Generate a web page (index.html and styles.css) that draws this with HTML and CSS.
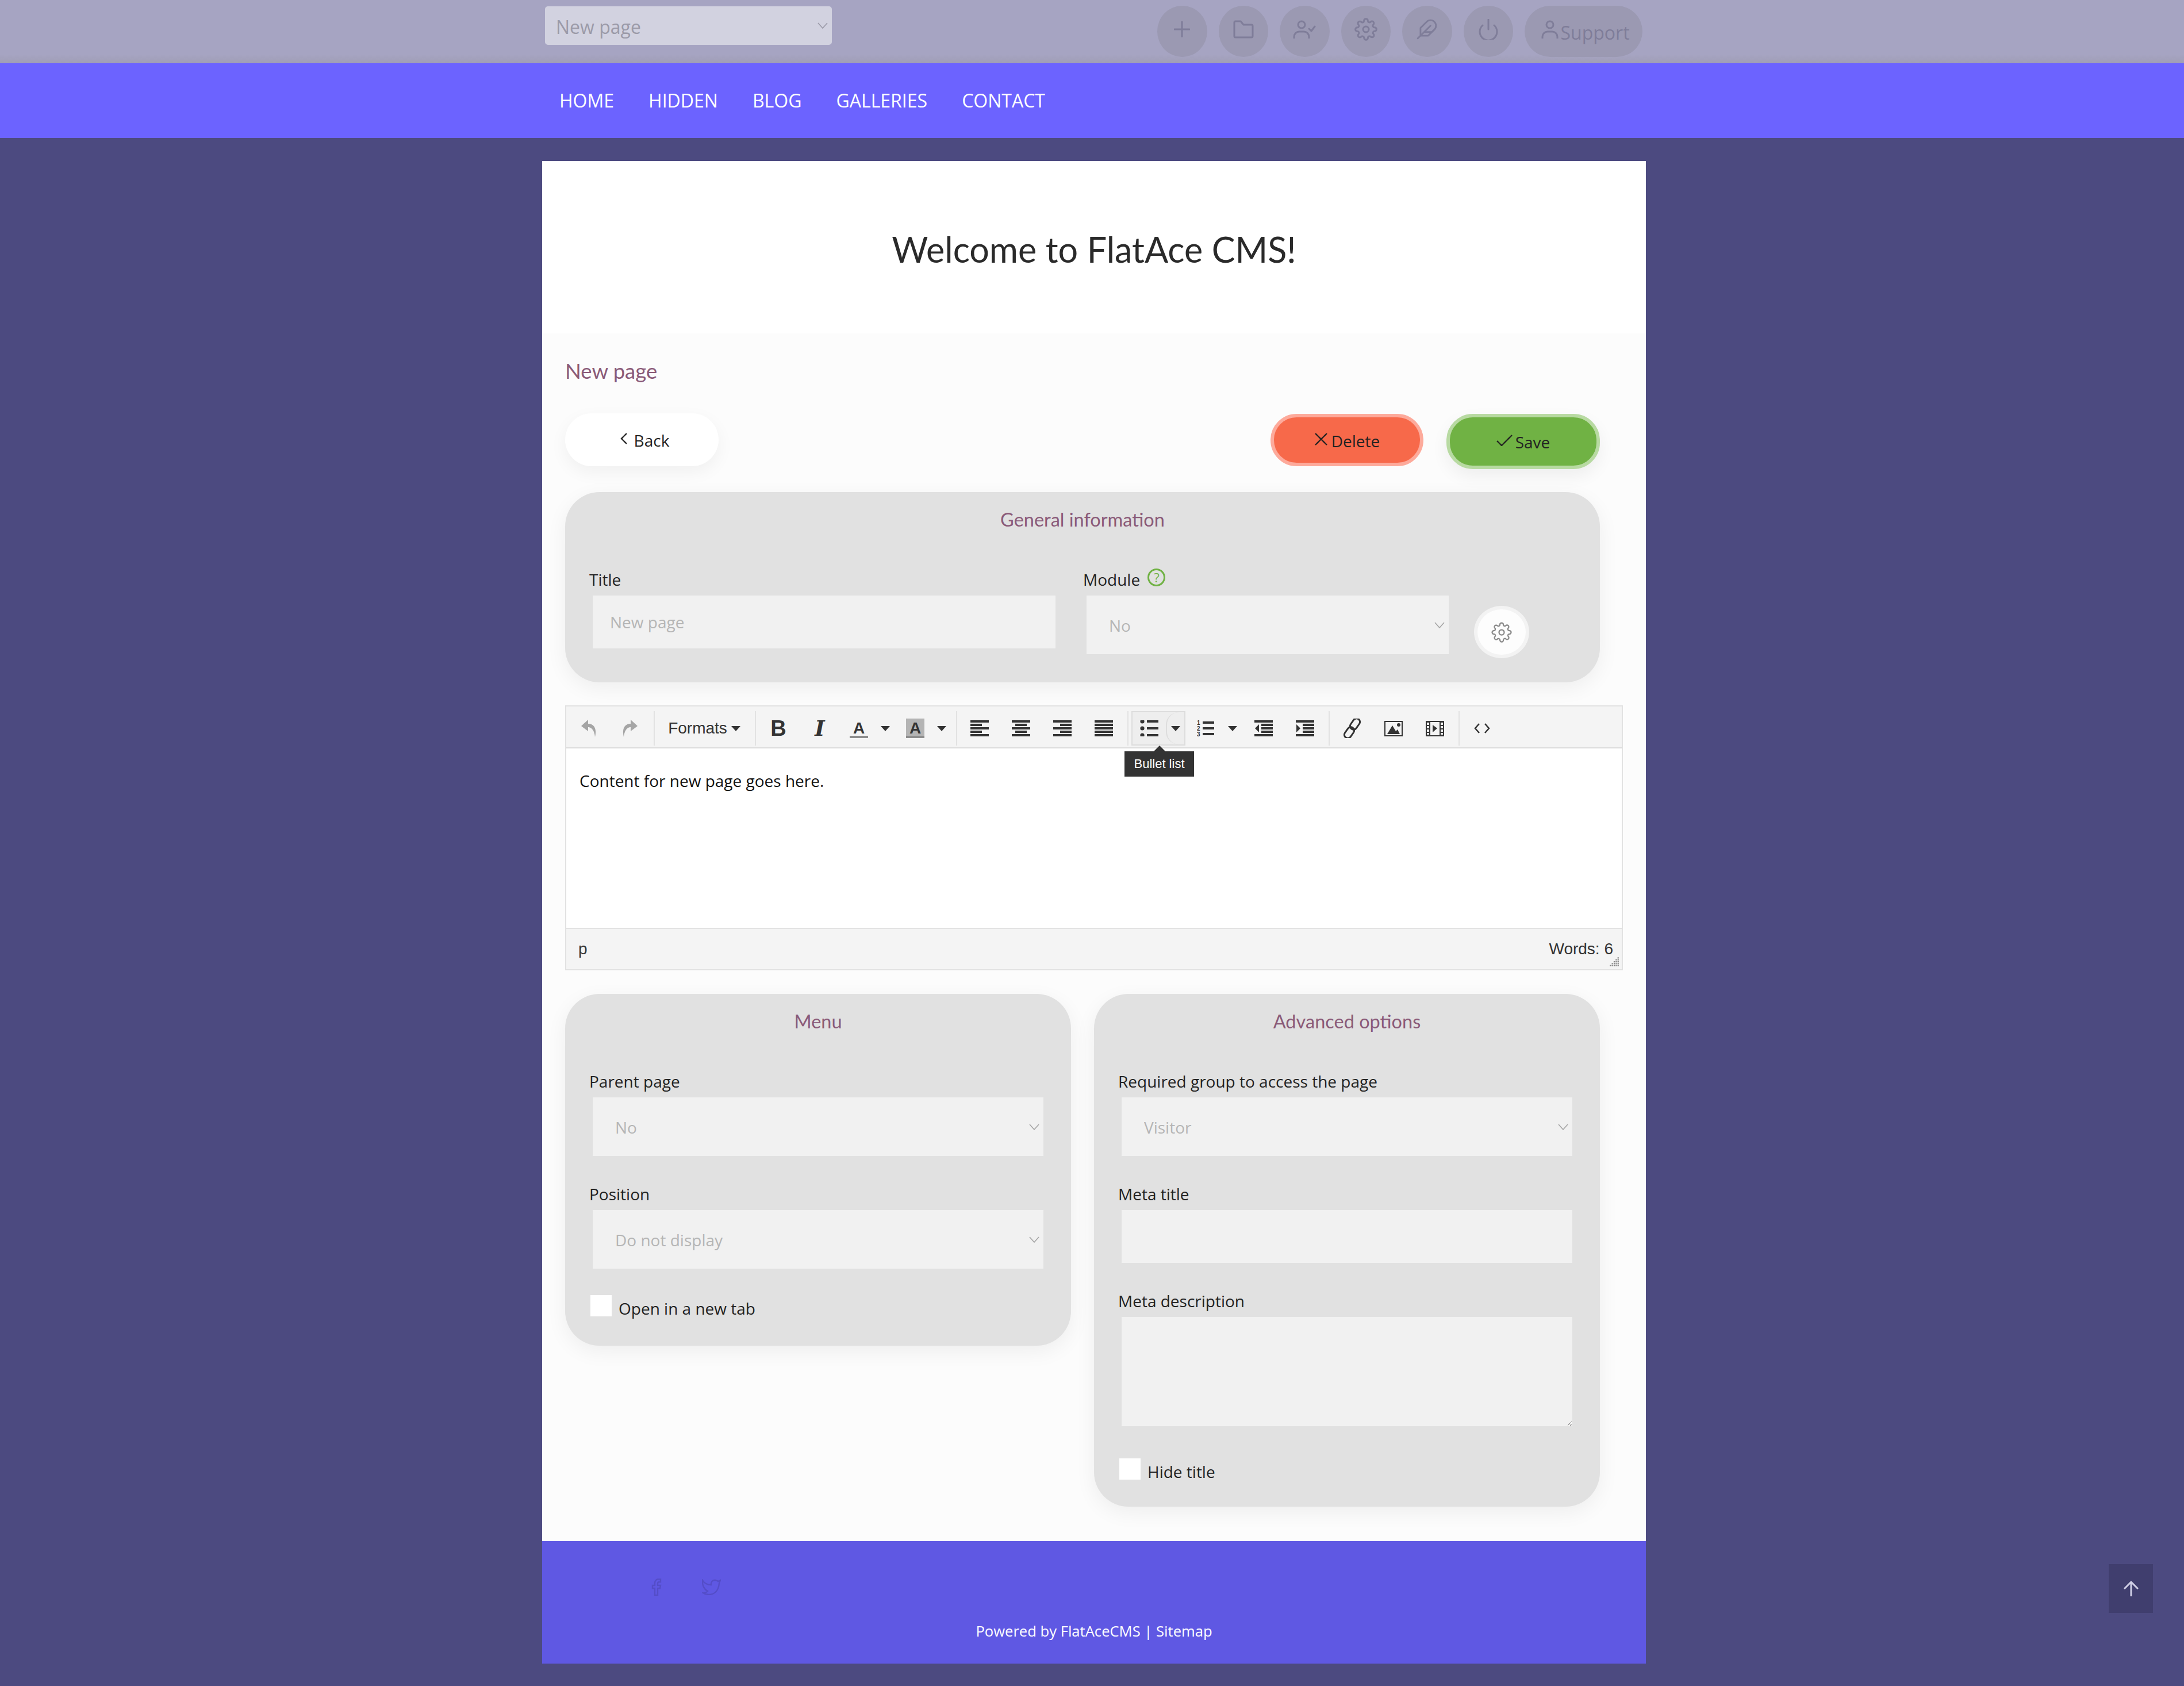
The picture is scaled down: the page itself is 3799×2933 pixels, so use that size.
FILE: index.html
```html
<!DOCTYPE html>
<html lang="en">
<head>
<meta charset="utf-8">
<title>New page - FlatAce CMS</title>
<link rel="stylesheet" href="styles.css">
</head>
<body>
<svg class="defs" xmlns="http://www.w3.org/2000/svg">
  <symbol id="gear" viewBox="0 0 24 24"><circle cx="12" cy="12" r="3"/><path d="M19.4 15a1.65 1.65 0 0 0 .33 1.82l.06.06a2 2 0 0 1 0 2.83 2 2 0 0 1-2.83 0l-.06-.06a1.65 1.65 0 0 0-1.82-.33 1.65 1.65 0 0 0-1 1.51V21a2 2 0 0 1-2 2 2 2 0 0 1-2-2v-.09A1.65 1.65 0 0 0 9 19.4a1.65 1.65 0 0 0-1.82.33l-.06.06a2 2 0 0 1-2.83 0 2 2 0 0 1 0-2.83l.06-.06a1.65 1.65 0 0 0 .33-1.82 1.65 1.65 0 0 0-1.51-1H3a2 2 0 0 1-2-2 2 2 0 0 1 2-2h.09A1.65 1.65 0 0 0 4.6 9a1.65 1.65 0 0 0-.33-1.82l-.06-.06a2 2 0 0 1 0-2.83 2 2 0 0 1 2.83 0l.06.06a1.65 1.65 0 0 0 1.82.33H9a1.65 1.65 0 0 0 1-1.51V3a2 2 0 0 1 2-2 2 2 0 0 1 2 2v.09a1.65 1.65 0 0 0 1 1.51 1.65 1.65 0 0 0 1.82-.33l.06-.06a2 2 0 0 1 2.83 0 2 2 0 0 1 0 2.83l-.06.06a1.65 1.65 0 0 0-.33 1.82V9a1.65 1.65 0 0 0 1.51 1H21a2 2 0 0 1 2 2 2 2 0 0 1-2 2h-.09a1.65 1.65 0 0 0-1.51 1z"/></symbol>
  <symbol id="al-left" viewBox="0 0 32 28"><path d="M0 0h32v4H0zM0 6h20v4H0zM0 12h32v4H0zM0 18h20v4H0zM0 24h32v4H0z"/></symbol>
  <symbol id="al-center" viewBox="0 0 32 28"><path d="M0 0h32v4H0zM6 6h20v4H6zM0 12h32v4H0zM6 18h20v4H6zM0 24h32v4H0z"/></symbol>
  <symbol id="al-right" viewBox="0 0 32 28"><path d="M0 0h32v4H0zM12 6h20v4H12zM0 12h32v4H0zM12 18h20v4H12zM0 24h32v4H0z"/></symbol>
  <symbol id="al-just" viewBox="0 0 32 28"><path d="M0 0h32v4H0zM0 6h32v4H0zM0 12h32v4H0zM0 18h32v4H0zM0 24h32v4H0z"/></symbol>
</svg>

<header class="topbar">
  <div class="topbar-inner">
    <select class="page-select" aria-label="Page"><option>New page</option></select>
    <div class="tools">
      <span class="tool"><svg class="i-line" width="28" height="28" viewBox="0 0 28 28"><path d="M14 1v26M1 14h26"/></svg></span>
      <span class="tool"><svg class="i-line" width="36" height="32" viewBox="0 0 36 32"><path d="M2 4a2 2 0 0 1 2-2h9l5 6h14a2 2 0 0 1 2 2v18a2 2 0 0 1-2 2H4a2 2 0 0 1-2-2z"/></svg></span>
      <span class="tool"><svg class="i-line" width="40" height="32" viewBox="0 0 40 32"><circle cx="15" cy="8" r="6"/><path d="M2 32v-3a9 9 0 0 1 9-9h8a9 9 0 0 1 9 9v3M28 15l4 4 6-8"/></svg></span>
      <span class="tool"><svg class="i-line i-thin" width="40" height="40"><use href="#gear"/></svg></span>
      <span class="tool"><svg class="i-line i-thin" width="38" height="38" viewBox="0 0 24 24"><path d="M20.24 12.24a6 6 0 0 0-8.49-8.49L5 10.5V19h8.5zM16 8 2 22M17.5 15H9"/></svg></span>
      <span class="tool"><svg class="i-line" width="34" height="36" viewBox="0 0 34 36"><path d="M27 11a15 15 0 1 1-20 0M17 1v17"/></svg></span>
      <span class="tool tool-pill"><svg class="i-line" width="30" height="32" viewBox="0 0 30 32"><circle cx="15" cy="8" r="6"/><path d="M2 32v-3a9 9 0 0 1 9-9h8a9 9 0 0 1 9 9v3"/></svg><span class="pill-text">Support</span></span>
    </div>
  </div>
</header>

<nav class="nav">
  <div class="nav-inner">
    <a class="nav-link">HOME</a>
    <a class="nav-link">HIDDEN</a>
    <a class="nav-link">BLOG</a>
    <a class="nav-link">GALLERIES</a>
    <a class="nav-link">CONTACT</a>
  </div>
</nav>

<div class="wrap">
  <div class="banner"><h1 class="site-title">Welcome to FlatAce CMS!</h1></div>

  <main class="content">
    <h2 class="page-title">New page</h2>

    <div class="actions">
      <a class="btn-pill btn-back"><svg class="i-ink" width="14" height="20" viewBox="0 0 14 20"><path d="M11 1 2 10l9 9"/></svg>Back</a>
      <div class="actions-right">
        <a class="btn-pill btn-delete"><svg class="i-ink" width="24" height="22" viewBox="0 0 24 22"><path d="m2 1 20 20M22 1 2 21"/></svg>Delete</a>
        <a class="btn-pill btn-save"><svg class="i-ink" width="28" height="20" viewBox="0 0 28 20"><path d="m1 11 8 8L27 1"/></svg>Save</a>
      </div>
    </div>

    <section class="panel panel-general">
      <h3 class="panel-title">General information</h3>
      <div class="general-row">
        <div class="field field-title">
          <label class="label">Title</label>
          <input class="control control-input" type="text" placeholder="New page">
        </div>
        <div class="field field-module">
          <label class="label">Module <span class="help">?</span></label>
          <select class="control control-select" aria-label="Module"><option>No</option></select>
        </div>
        <span class="gear-btn"><svg class="i-grey" width="36" height="36"><use href="#gear"/></svg></span>
      </div>
    </section>

    <section class="editor">
      <div class="toolbar">
        <div class="tb-group tb-first">
          <span class="tb"><svg class="i-off" width="26" height="30" viewBox="0 0 26 30"><path d="M12 0 0 11l12 9v-7c6 0 11 6 12 17 3-12 0-23-12-23z"/></svg></span>
          <span class="tb"><svg class="i-off i-flip" width="26" height="30" viewBox="0 0 26 30"><path d="M12 0 0 11l12 9v-7c6 0 11 6 12 17 3-12 0-23-12-23z"/></svg></span>
        </div>
        <div class="tb-group">
          <span class="tb tb-formats">Formats<i class="caret"></i></span>
        </div>
        <div class="tb-group">
          <span class="tb tb-b">B</span>
          <span class="tb tb-i">I</span>
          <span class="tb tb-split"><span class="color-a">A</span><i class="caret"></i></span>
          <span class="tb tb-split"><span class="color-a color-a-bg">A</span><i class="caret"></i></span>
        </div>
        <div class="tb-group">
          <span class="tb"><svg class="i-fill" width="32" height="28"><use href="#al-left"/></svg></span>
          <span class="tb"><svg class="i-fill" width="32" height="28"><use href="#al-center"/></svg></span>
          <span class="tb"><svg class="i-fill" width="32" height="28"><use href="#al-right"/></svg></span>
          <span class="tb"><svg class="i-fill" width="32" height="28"><use href="#al-just"/></svg></span>
        </div>
        <div class="tb-group">
          <span class="tb-hover">
            <span class="tb-hover-main"><svg class="i-fill" width="32" height="28" viewBox="0 0 32 28"><circle cx="4" cy="2" r="3.600"/><circle cx="4" cy="14" r="3.600"/><circle cx="4" cy="26" r="3.600"/><path d="M12 0h20v4H12zM12 12h20v4H12zM12 24h20v4H12z"/></svg></span>
            <span class="tb-hover-caret"><i class="caret"></i></span>
            <span class="tooltip">Bullet list</span>
          </span>
          <span class="tb tb-split tb-num"><svg class="i-fill" width="32" height="30" viewBox="0 0 32 30"><text class="num-text" x="0" y="9">1</text><text class="num-text" x="0" y="19">2</text><text class="num-text" x="0" y="29">3</text><path d="M10 3h20v4H10zM10 13h20v4H10zM10 23h20v4H10z"/></svg><i class="caret"></i></span>
          <span class="tb"><svg class="i-fill" width="32" height="28" viewBox="0 0 32 28"><path d="M0 0h32v4H0zM12 6h20v4H12zM12 12h20v4H12zM12 18h20v4H12zM0 24h32v4H0zM8 7v14L1 14z"/></svg></span>
          <span class="tb"><svg class="i-fill" width="32" height="28" viewBox="0 0 32 28"><path d="M0 0h32v4H0zM12 6h20v4H12zM12 12h20v4H12zM12 18h20v4H12zM0 24h32v4H0zM1 7v14l7-7z"/></svg></span>
        </div>
        <div class="tb-group">
          <span class="tb"><svg class="i-link" width="36" height="34" viewBox="0 0 36 34"><rect x="17" y="-1" width="12" height="21" rx="6" transform="rotate(35 23 9.500)"/><rect x="7" y="14" width="12" height="21" rx="6" transform="rotate(35 13 24.500)"/></svg></span>
          <span class="tb"><svg class="i-fill" width="32" height="28" viewBox="0 0 32 28"><path fill-rule="evenodd" d="M0 1h32v27H0zM2 3v23h28V3z"/><path d="M5 24 14 9l6 10 3-3 4 8z"/><circle cx="25" cy="8" r="3"/></svg></span>
          <span class="tb"><svg class="i-fill" width="32" height="28" viewBox="0 0 32 28"><path fill-rule="evenodd" d="M0 1h32v27H0zM8 3v23h16V3z"/><path class="film-hole" d="M2 4h4v4H2zM2 10h4v4H2zM2 16h4v4H2zM2 22h4v3H2zM26 4h4v4h-4zM26 10h4v4h-4zM26 16h4v4h-4zM26 22h4v3h-4z"/><path d="m12 8 8 6-8 7z"/></svg></span>
        </div>
        <div class="tb-group tb-last">
          <span class="tb"><svg class="i-code" width="28" height="18" viewBox="0 0 28 18"><path d="M9 1 2 9l7 8M19 1l7 8-7 8"/></svg></span>
        </div>
      </div>
      <div class="editor-body"><p class="editor-text">Content for new page goes here.</p></div>
      <div class="statusbar">
        <span>p</span>
        <span>Words: 6</span>
        <svg class="grip" width="18" height="18" viewBox="0 0 16 16"><path d="M13 1h2v2h-2zM10 4h2v2h-2zM13 4h2v2h-2zM7 7h2v2H7zM10 7h2v2h-2zM13 7h2v2h-2zM4 10h2v2H4zM7 10h2v2H7zM10 10h2v2h-2zM13 10h2v2h-2zM1 13h2v2H1zM4 13h2v2H4zM7 13h2v2H7zM10 13h2v2h-2zM13 13h2v2h-2z"/></svg>
      </div>
    </section>

    <div class="columns">
      <section class="panel panel-menu">
        <h3 class="panel-title">Menu</h3>
        <div class="field">
          <label class="label">Parent page</label>
          <select class="control control-select" aria-label="Parent page"><option>No</option></select>
        </div>
        <div class="field">
          <label class="label">Position</label>
          <select class="control control-select" aria-label="Position"><option>Do not display</option></select>
        </div>
        <label class="check"><input class="check-box" type="checkbox">Open in a new tab</label>
      </section>

      <section class="panel panel-advanced">
        <h3 class="panel-title">Advanced options</h3>
        <div class="field">
          <label class="label">Required group to access the page</label>
          <select class="control control-select" aria-label="Required group"><option>Visitor</option></select>
        </div>
        <div class="field">
          <label class="label">Meta title</label>
          <input class="control control-input" type="text">
        </div>
        <div class="field field-desc">
          <label class="label">Meta description</label>
          <textarea class="control control-area"></textarea>
        </div>
        <label class="check check-hide"><input class="check-box" type="checkbox">Hide title</label>
      </section>
    </div>
  </main>

  <footer class="footer">
    <div class="social">
      <svg class="i-social" width="18" height="30" viewBox="0 0 18 30"><path d="M6 29V17H2v-5h4V8c0-4 2.500-7 7-7h3v5h-2c-2 0-3 1-3 3v3h5l-1 5h-4v12z"/></svg>
      <svg class="i-social" width="33" height="28" viewBox="0 0 33 28"><path d="M1 2c3 5 8 8 15 8-1-5 3-9 8-8 2 0 3 1 4 2l4-2-2 5c-1 14-9 20-18 20-4 0-7-1-10-3 3 0 6-1 8-3-6-3-10-11-9-19z"/></svg>
    </div>
    <p class="powered">Powered by FlatAceCMS | Sitemap</p>
  </footer>
</div>

<a class="to-top"><svg class="i-top" width="26" height="28" viewBox="0 0 26 28"><path d="M13 27V2M1 14 13 2l12 12"/></svg></a>
</body>
</html>
```

FILE: styles.css
```css
* { box-sizing: border-box; }

html, body { margin: 0; padding: 0; }

body {
  position: relative;
  height: 2933px;
  overflow: hidden;
  background: #4c4a80;
  font-family: "Open Sans", sans-serif;
  font-size: 28px;
  color: #222;
}

.defs { display: none; }

/* top bar */
.topbar {
  height: 110px;
  background: linear-gradient(#a6a4c2 0, #a6a4c2 86%, #a09eb6 100%);
}

.topbar-inner {
  width: 1920px;
  margin-left: 943px;
  padding: 10px 6px 0 5px;
  display: flex;
  justify-content: space-between;
  align-items: flex-start;
}

.page-select {
  appearance: none;
  width: 499px;
  height: 67px;
  margin-top: 1px;
  padding: 4px 0 0 19px;
  border: 0;
  border-radius: 5px;
  background: #d2d2e0 url("data:image/svg+xml,%3Csvg xmlns='http://www.w3.org/2000/svg' width='18' height='11'%3E%3Cpath d='M1 1l8 9 8-9' fill='none' stroke='%239b9aa8' stroke-width='1.6'/%3E%3C/svg%3E") no-repeat right 7px center;
  font: 32px "Open Sans", sans-serif;
  color: #9b9aa8;
}

.tools { display: flex; gap: 20px; }

.tool {
  width: 86.500px;
  height: 89px;
  border-radius: 50%;
  background: #9b99b2;
  display: flex;
  align-items: center;
  justify-content: center;
  padding-bottom: 7px;
}

.tool-pill {
  width: 205px;
  border-radius: 45px;
  gap: 3px;
  padding: 0 0 0 7px;
  align-items: center;
}

.tool-pill svg { margin-top: -7px; }

.pill-text {
  font-size: 32px;
  color: #7f7d99;
  line-height: 44px;
  margin-top: 4px;
}

.i-line { fill: none; stroke: #7f7d99; stroke-width: 3; stroke-linecap: round; stroke-linejoin: round; }
.i-line.i-thin { stroke-width: 1.800; }

/* nav */
.nav { height: 130px; background: #6c63ff; }

.nav-inner {
  width: 1920px;
  margin-left: 943px;
  padding-left: 30px;
  display: flex;
  gap: 60px;
}

.nav-link {
  font-size: 32px;
  line-height: 130px;
  color: #fff;
}

/* page frame */
.wrap {
  width: 1920px;
  margin: 40px 0 0 943px;
}

.banner {
  height: 300px;
  background: #fff;
  display: flex;
  align-items: center;
  justify-content: center;
}

.site-title {
  margin: 0 0 -6px;
  font: 400 61px "Lato", sans-serif;
  color: #2a2a2a;
}

.content {
  height: 2101px;
  background: #fcfcfc;
  padding: 45px 40px 0;
}

.page-title {
  margin: 0 0 54px;
  font: 400 36.500px/40px "Lato", sans-serif;
  color: #8a5a78;
}

.actions {
  width: 1800px;
  height: 97px;
  margin-bottom: 40px;
  display: flex;
  justify-content: space-between;
  align-items: flex-start;
}

.actions-right { display: flex; gap: 40px; padding-top: 1px; align-items: flex-start; }

.btn-pill {
  width: 267px;
  display: flex;
  align-items: center;
  justify-content: center;
  border-radius: 46px;
  color: #222;
  font-size: 28px;
  padding-top: 2px;
}

.btn-pill svg { margin-top: -6px; }

.btn-back {
  height: 92px;
  background: #fff;
  gap: 10px;
  padding-left: 10px;
  box-shadow: 0 10px 30px rgba(0, 0, 0, .05);
}

.btn-delete {
  height: 91px;
  width: 266px;
  gap: 6px;
  background: #f7694a;
  border: 6px solid #fdaa9b;
}

.btn-save {
  height: 96px;
  gap: 5px;
  background: #70b244;
  border: 6px solid #b8daa2;
  box-shadow: 0 12px 30px rgba(0, 0, 0, .06);
}

.i-ink { fill: none; stroke: #222; stroke-width: 2.400; }

/* panels */
.panel {
  background: #e1e1e1;
  border-radius: 60px;
  box-shadow: 0 10px 36px rgba(0, 0, 0, .06);
}

.panel-title {
  margin: 0;
  padding-top: 28px;
  font: 400 32.500px/40px "Lato", sans-serif;
  color: #8a5a78;
  text-align: center;
}

.panel-general {
  width: 1800px;
  height: 331px;
  margin-bottom: 40px;
}

.general-row {
  display: flex;
  align-items: flex-start;
  margin-top: 64px;
  padding-left: 42px;
}

.field-title { width: 859px; }
.field-module { width: 636px; }

.field { margin-bottom: 46px; }
.general-row .field { margin-bottom: 0; }

.label {
  display: block;
  height: 40px;
  line-height: 40px;
  margin-bottom: 8px;
  color: #222;
}

.help {
  display: inline-block;
  width: 31px;
  height: 31px;
  border: 3px solid #70b244;
  border-radius: 50%;
  margin-left: 6px;
  color: #70b244;
  font-size: 22px;
  line-height: 25px;
  text-align: center;
  vertical-align: 6px;
}

.control {
  display: block;
  width: 784px;
  margin-left: 6px;
  border: 0;
  border-radius: 0;
  background-color: #f1f1f1;
  font: 28px "Open Sans", sans-serif;
  color: #b5b5b5;
}

.control-input { height: 92px; padding: 0 30px; }
.control-input::placeholder { color: #b5b5b5; opacity: 1; }

.control-select {
  appearance: none;
  height: 102px;
  padding: 2px 0 0 39px;
  background-image: url("data:image/svg+xml,%3Csvg xmlns='http://www.w3.org/2000/svg' width='18' height='11'%3E%3Cpath d='M1 1l8 9 8-9' fill='none' stroke='%23a5a5a5' stroke-width='1.6'/%3E%3C/svg%3E");
  background-repeat: no-repeat;
  background-position: right 7px center;
}

.control-area { height: 190px; }

.field-title .control { width: 805px; }
.field-module .control { width: 630px; margin-top: 1px; }

.gear-btn {
  width: 96px;
  height: 91px;
  margin: 66px 0 0 44px;
  border: 6px solid #f3f3f3;
  border-radius: 50%;
  background: #fdfdfd;
  display: flex;
  align-items: center;
  justify-content: center;
}

.i-grey { fill: none; stroke: #8a8a8a; stroke-width: 1.500; }

/* editor */
.editor {
  width: 1840px;
  height: 461px;
  margin-bottom: 41px;
  border: 2px solid #e2e2e2;
  background: #fff;
}

.toolbar {
  height: 73px;
  padding-top: 8px;
  display: flex;
  background: #f4f4f4;
  border-bottom: 2px solid #dcdcdc;
}

.tb-group {
  display: flex;
  height: 60px;
  padding: 0 5px 0 3px;
  border-left: 2px solid #e2e2e2;
}

.tb-first { border-left: 0; }

.tb {
  width: 72px;
  height: 60px;
  display: flex;
  align-items: center;
  justify-content: center;
  font-family: "Liberation Sans", sans-serif;
  color: #333;
}

.i-off { fill: #a5a5a5; }
.i-flip { transform: scaleX(-1); }
.i-fill { fill: #333; }
.film-hole { fill: #f4f4f4; }
.i-link { fill: none; stroke: #333; stroke-width: 3; }
.i-code { fill: none; stroke: #333; stroke-width: 2.500; }

.num-text { font: 700 10px "Liberation Sans", sans-serif; }

.tb-formats { width: 166px; gap: 7px; }

.caret {
  display: inline-block;
  width: 0;
  height: 0;
  border-left: 8px solid transparent;
  border-right: 8px solid transparent;
  border-top: 9px solid #333;
}

.tb-b {
  font: 700 38px "Liberation Sans", sans-serif;
}

.tb-i {
  font: italic 700 37px "DejaVu Serif", serif;
}

.tb-split {
  width: 98px;
  justify-content: flex-start;
  padding-left: 16px;
  gap: 22px;
}

.color-a {
  width: 32px;
  height: 34px;
  padding-top: 3px;
  border-bottom: 4px solid #8e8e8e;
  font: 700 28px/28px "Liberation Sans", sans-serif;
  text-align: center;
}

.color-a-bg { background: #b4b4b4; }

.tb-hover {
  position: relative;
  width: 94px;
  height: 60px;
  margin: 0 4px 0 2px;
  display: flex;
  border: 2px solid #ddd;
  background: #eee;
}

.tb-hover-main {
  width: 58px;
  display: flex;
  align-items: center;
  justify-content: center;
}

.tb-hover-caret {
  flex: 1;
  display: flex;
  align-items: center;
  justify-content: center;
  border-left: 2px solid #ddd;
  border-radius: 22px 0 0 22px;
}

.tooltip {
  position: absolute;
  left: -14px;
  top: 68px;
  width: 121px;
  height: 44px;
  background: #333;
  color: #fff;
  font: 22px/44px "Liberation Sans", sans-serif;
  text-align: center;
  z-index: 2;
}

.tooltip::before {
  content: "";
  position: absolute;
  left: 50%;
  top: -10px;
  margin-left: -10px;
  border-left: 10px solid transparent;
  border-right: 10px solid transparent;
  border-bottom: 10px solid #333;
}

.tb-num { width: 96px; }

.editor-body { height: 312px; padding: 37px 23px 0; }

.editor-text { margin: 0; line-height: 38px; color: #111; }

.statusbar {
  position: relative;
  height: 72px;
  padding: 0 15px 0 21px;
  display: flex;
  justify-content: space-between;
  align-items: center;
  background: #f4f4f4;
  border-top: 2px solid #e2e2e2;
  font-family: "Liberation Sans", sans-serif;
  color: #333;
}

.grip {
  position: absolute;
  right: 4px;
  bottom: 4px;
  fill: #888;
}

/* columns */
.columns {
  width: 1800px;
  display: flex;
  align-items: flex-start;
  gap: 40px;
}

.panel-menu { width: 880px; height: 612px; }
.panel-advanced { width: 880px; height: 892px; }

.panel-menu .panel-title + .field,
.panel-advanced .panel-title + .field { margin-top: 64px; }

.columns .field { padding-left: 42px; }

.field-desc { margin-bottom: 56px; }

.check {
  display: flex;
  align-items: flex-start;
  gap: 12px;
  margin-top: 1px;
  padding-left: 44px;
  line-height: 46px;
}

.check-hide { margin-top: 0; }

.check-box {
  appearance: none;
  width: 37px;
  height: 37px;
  margin: 0;
  background: #fff;
}

/* footer */
.footer {
  height: 213px;
  background: #5f58e3;
  padding-top: 65px;
  position: relative;
}

.social {
  display: flex;
  align-items: center;
  gap: 70px;
  padding-left: 190px;
  height: 30px;
}

.i-social { fill: none; stroke: #544dc8; stroke-width: 2.400; }

.powered {
  margin: 44px 0 0;
  text-align: center;
  color: #fff;
  font-size: 25.600px;
  line-height: 36px;
}

.to-top {
  position: absolute;
  left: 3668px;
  top: 2721px;
  width: 77px;
  height: 85px;
  background: #403e6e;
  display: flex;
  align-items: center;
  justify-content: center;
}

.i-top { fill: none; stroke: #d0cfe6; stroke-width: 3; }
```
